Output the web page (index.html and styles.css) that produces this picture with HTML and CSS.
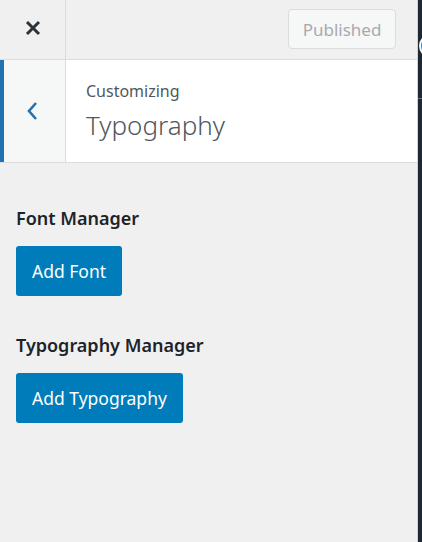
FILE: index.html
```html
<!DOCTYPE html>
<html>
<head>
<meta charset="utf-8">
<link rel="stylesheet" href="styles.css">
</head>
<body>
<div class="app">
  <aside class="sidebar">
    <div class="topbar">
      <div class="close">
        <svg width="16" height="16" viewBox="0 0 16 16"><path d="M2 2L14 14M14 2L2 14" stroke="#2c3338" stroke-width="3" stroke-linecap="butt"/></svg>
      </div>
      <div class="topbar-fill">
        <button class="published">Published</button>
      </div>
    </div>
    <div class="header">
      <div class="back">
        <svg width="12" height="20" viewBox="0 0 12 20"><path d="M10 2L3 10L10 18" fill="none" stroke="#2271b1" stroke-width="2.6"/></svg>
      </div>
      <div class="titles">
        <div class="crumb">Customizing</div>
        <div class="title">Typography</div>
      </div>
    </div>
    <div class="content">
      <div class="control">
        <h3 class="control-title">Font Manager</h3>
        <button class="primary">Add Font</button>
      </div>
      <div class="control">
        <h3 class="control-title">Typography Manager</h3>
        <button class="primary">Add Typography</button>
      </div>
    </div>
  </aside>
  <div class="preview">
    <span class="dot"></span>
    <span class="line"></span>
  </div>
</div>
</body>
</html>
```
FILE: styles.css
```css
* { box-sizing: border-box; }
html, body { margin: 0; padding: 0; }
body {
  font-family: "Noto Sans", "Open Sans", sans-serif;
  background: #1d2a36;
  height: 542px;
  overflow: hidden;
}
.app { display: flex; height: 542px; }
.sidebar {
  width: 418px;
  flex: none;
  background: #f0f0f1;
  border-right: 1px solid #d0d3d6;
  display: flex;
  flex-direction: column;
}
.topbar {
  height: 60px;
  display: flex;
  border-bottom: 1px solid #dcdcde;
}
.close {
  width: 66px;
  border-right: 1px solid #dcdcde;
  display: flex;
  align-items: center;
  justify-content: center;
  padding-bottom: 4px;
}
.topbar-fill {
  flex: 1;
  display: flex;
  justify-content: flex-end;
  align-items: flex-start;
  padding: 9px 21px 0 0;
}
.published {
  width: 108px;
  height: 40px;
  border: 1px solid #dcdcde;
  border-radius: 4px;
  background: #f6f7f7;
  color: #a7aaad;
  font-family: inherit;
  font-size: 17px;
  padding: 0;
}
.header {
  display: flex;
  height: 103px;
  background: #fff;
  border-bottom: 1px solid #dcdcde;
}
.back {
  width: 66px;
  border-left: 4px solid #2271b1;
  border-right: 1px solid #dcdcde;
  background: #f6f7f7;
  display: flex;
  align-items: center;
  justify-content: center;
  padding-right: 6px;
}
.titles {
  padding: 20px 0 0 20px;
  color: #50575e;
}
.crumb { font-size: 16px; line-height: 22px; }
.title {
  font-size: 26px;
  font-weight: 300;
  line-height: 34px;
  margin-top: 6px;
}
.content { padding: 43px 16px 0; }
.control { margin-bottom: 37px; }
.control-title {
  margin: 0 0 16px;
  font-size: 18px;
  font-weight: 600;
  line-height: 24px;
  color: #1d2327;
}
.primary {
  height: 50px;
  padding: 0 16px;
  border: none;
  border-radius: 3px;
  background: #007cba;
  color: #fff;
  font-family: inherit;
  font-size: 17.5px;
}
.preview { flex: 1; position: relative; background: #1c2935; }
.dot {
  position: absolute;
  left: 1px;
  top: 34px;
  width: 24px;
  height: 24px;
  border-radius: 50%;
  background: #3582c4;
  border: 2px solid #fff;
}
.line {
  position: absolute;
  left: 0; right: 0;
  top: 98px;
  height: 1px;
  background: #6b7480;
}
```
